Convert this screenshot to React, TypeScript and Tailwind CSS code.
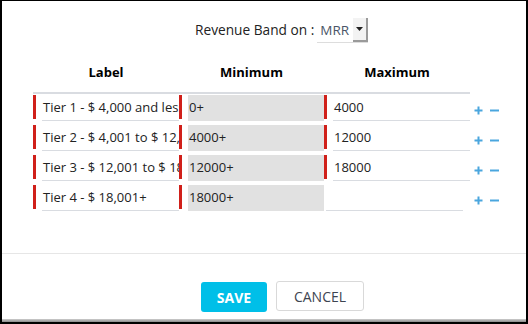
import React from 'react';

const rows = [
  { label: 'Tier 1 - $ 4,000 and less', min: '0+', max: '4000' },
  { label: 'Tier 2 - $ 4,001 to $ 12,000', min: '4000+', max: '12000' },
  { label: 'Tier 3 - $ 12,001 to $ 18,000', min: '12000+', max: '18000' },
  { label: 'Tier 4 - $ 18,001+', min: '18000+', max: '' },
];

const RedBar = () => <div className="w-[3px] h-[24px] bg-[#d0201a] shrink-0" />;

const Plus = () => (
  <svg width="9" height="9" viewBox="0 0 9 9">
    <path d="M4.5 0.5v8M0.5 4.5h8" stroke="#4aa6de" strokeWidth="2" />
  </svg>
);

const Minus = () => (
  <svg width="9" height="9" viewBox="0 0 9 9">
    <path d="M0 4.5h9" stroke="#4aa6de" strokeWidth="2" />
  </svg>
);

export default function App() {
  return (
    <div
      className="w-[528px] h-[324px] bg-white border-x-2 border-t border-black flex flex-col text-[#222]"
      style={{ fontFamily: '"Open Sans", Arial, sans-serif' }}
    >
      <div className="h-[252px] flex flex-col">
        {/* revenue band selector */}
        <div className="flex items-center mt-[17px] ml-[193px] h-[25px]">
          <span className="text-[13.7px] mr-[3px]">Revenue Band on :</span>
          <div className="flex h-[25px] w-[51px] border-b border-[#ddd] bg-white">
            <span className="flex-1 flex items-center pl-[3px] text-[13.5px] text-[#4a5568]">MRR</span>
            <div className="w-[15px] h-[24px] bg-[#f3f3f3] border-r-2 border-b-2 border-[#9a9a9a] flex items-center justify-center">
              <svg width="7" height="4" viewBox="0 0 7 4">
                <path d="M0 0h7L3.5 4z" fill="#222" />
              </svg>
            </div>
          </div>
        </div>

        {/* header */}
        <div className="ml-[31px] w-[437px] mt-[16px] h-[35px] pt-[4px] flex items-start border-b-2 border-[#d9dce1] text-[13px] font-bold text-black">
          <div className="w-[146px] text-center">Label</div>
          <div className="w-[145px] text-center">Minimum</div>
          <div className="w-[146px] text-center">Maximum</div>
        </div>

        {/* rows */}
        <div className="ml-[31px] mt-[1px] flex flex-col gap-[4px]">
          {rows.map((r, i) => (
            <div key={i} className="flex h-[26px] text-[13px]">
              <div className="w-[146px] flex gap-[6px]">
                <RedBar />
                <div className="w-[137px] h-[26px] border-b border-[#d9dce1] pl-[1px] flex items-center overflow-hidden whitespace-nowrap">
                  {r.label}
                </div>
              </div>
              <div className="w-[145px] flex gap-[6px]">
                <RedBar />
                <div className="w-[136px] h-[26px] bg-[#e1e1e1] pl-[1px] flex items-center">{r.min}</div>
              </div>
              <div className="w-[146px] flex gap-[6px]">
                {r.max ? <RedBar /> : <div className="w-0" />}
                <div
                  className={`w-[137px] h-[26px] border-b border-[#d9dce1] pl-[1px] flex items-center ${
                    r.max ? '' : '-ml-[4px]'
                  }`}
                >
                  {r.max}
                </div>
              </div>
              <div className="flex items-center gap-[7px] ml-[4px] pt-[4px]">
                <Plus />
                <Minus />
              </div>
            </div>
          ))}
        </div>
      </div>

      <div className="h-px bg-[#e6e6e6]" />

      {/* actions */}
      <div className="flex-1 flex items-start pt-[28px] ml-[199px] gap-[9px]">
        <button className="w-[66px] h-[30px] rounded-[3px] bg-[#00bfe8] text-white text-[14px] font-bold">
          SAVE
        </button>
        <button className="w-[88px] h-[30px] -mt-px rounded-[3px] border border-[#d9d9d9] bg-white text-[#3d4450] text-[14px]">
          CANCEL
        </button>
      </div>

      <div className="h-[3px] bg-gradient-to-b from-[#cfcfcf] to-[#8a8a8a]" />
      <div className="h-[2px] bg-black" />
    </div>
  );
}
